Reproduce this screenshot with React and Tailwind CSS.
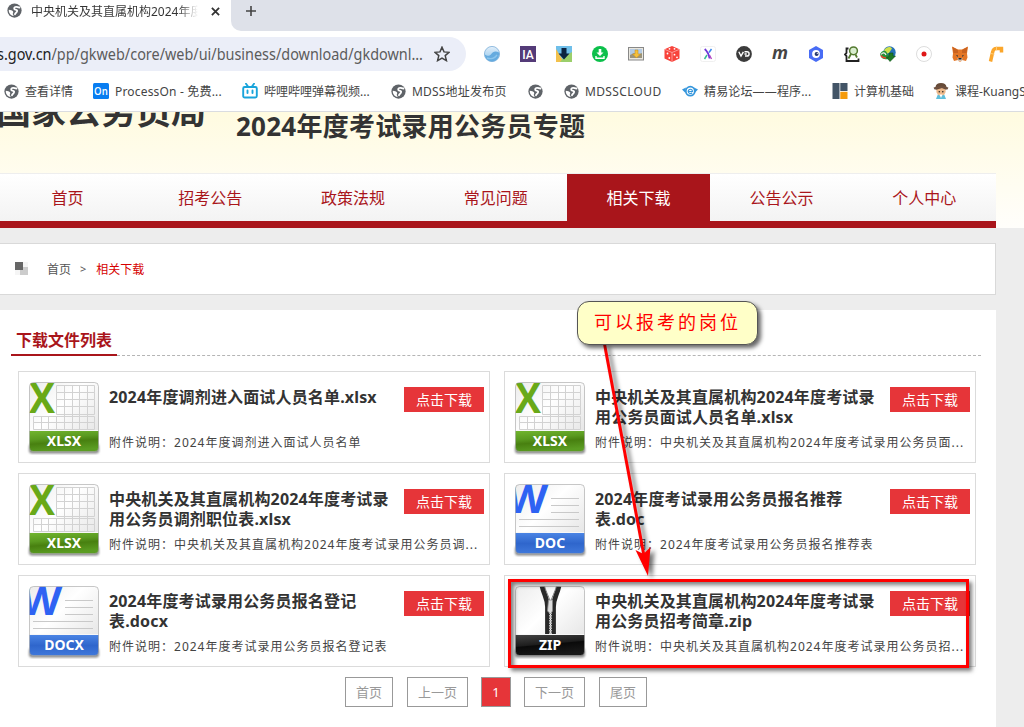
import React from "react";

const UI = "font-['Noto_Sans','Noto_Sans_CJK_SC',sans-serif]";

function Globe() {
  return (
    <svg viewBox="0 0 16 16" className="size-[15px] shrink-0">
      <circle cx="8" cy="8" r="7.600" fill="#5f6368" />
      <path d="M13.300 4.800C11.500 5 10.800 3.300 8.800 4.300 7 5.300 7.500 6.800 9 7.100c1.800.4 2 1 1.700 2-.4 1.300-1.900 1.300-2.200 2.900" fill="none" stroke="#fff" strokeWidth="1.900" strokeLinecap="round" />
      <path d="M1.900 7.200c2 .2 3.800.5 4.600 1.800.6 1.100-.5 1.600-.3 2.600.1.700.8 1 .8 2.200C3.800 13.400 1.600 10.500 1.900 7.200z" fill="#fff" />
    </svg>
  );
}

const S = ({ children }) => (
  <svg viewBox="0 0 16 16" className="size-4 shrink-0">{children}</svg>
);

const extensions = [
  <S><defs><linearGradient id="sph" x1="0" y1="0" x2="0" y2="1"><stop offset="0" stopColor="#e3effa" /><stop offset="1" stopColor="#8cc4ea" /></linearGradient></defs><circle cx="8" cy="8" r="7.600" fill="url(#sph)" stroke="#6ba5d4" strokeWidth=".7" /><path d="M.8 8.500c3 2 5 1.500 6.500-.5S11 4.500 15 6.500C15.500 12 12 15.300 8 15.300S1.200 12.500.8 8.500z" fill="#65abdf" /><path d="M3 12c4 1.500 8 0 10-3" stroke="#8cc5ec" strokeWidth="1.500" fill="none" /></S>,
  <S><rect width="16" height="16" fill="#543b78" /><text x="8" y="12.700" textAnchor="middle" fill="#fff" fontSize="13" fontWeight="500" fontFamily="Roboto" textLength="11.500" lengthAdjust="spacingAndGlyphs">IA</text></S>,
  <S><rect width="16" height="16" fill="#6fbfea" /><path d="M0 3v13h8z" fill="#f2c14c" /><path d="M16 6v10H4l4-5z" fill="#9bcf6b" /><path d="M5.500 2h5v5.500h3L8 13.500 2.500 7.500h3z" fill="#0c2340" /></S>,
  <S><circle cx="8" cy="8" r="8" fill="#0cc04b" /><path d="M6.700 3h2.600v3.500h2.200L8 10 4.500 6.500h2.200z" fill="#fff" /><path d="M4 10v2.300h8V10" fill="none" stroke="#fff" strokeWidth="1.400" /></S>,
  <S><rect x=".5" y="1.500" width="15" height="12.500" fill="#e9e7df" stroke="#888" /><rect x="2" y="3" width="12" height="6" fill="#b4cbe4" /><path d="M2 9l4-2 3 2 5-2v5H2z" fill="#9a937c" /><path d="M7 4h3v4h2.500L8.500 12 4.500 8H7z" fill="#f4c03b" stroke="#c68b15" strokeWidth=".5" /></S>,
  <S><path d="M8 0l7.500 3.200v9.300L8 16 .5 12.500V3.200z" fill="#f8433b" /><path d="M1 3.500l7 3 7-3M8 6.500V16" stroke="#fbb" strokeWidth=".7" fill="none" /><g fill="#fff"><circle cx="5.500" cy="2.800" r=".9" /><circle cx="10.500" cy="2.800" r=".9" /><circle cx="3.500" cy="7.500" r=".9" /><circle cx="5.300" cy="12" r=".9" /><circle cx="10.500" cy="8.700" r=".9" /><circle cx="13" cy="11.300" r=".9" /></g></S>,
  <S><rect x=".5" y=".5" width="15" height="15" rx="2" fill="#fff" stroke="#f0f0f0" /><path d="M4.700 3C7.500 5.500 9 9 9.500 12.500" stroke="#7037d8" strokeWidth="1.700" fill="none" /><path d="M11.500 3L9 6.500" stroke="#3987ed" strokeWidth="1.500" /><path d="M7 9l-2.500 4" stroke="#35bd92" strokeWidth="1.500" /><path d="M9.500 9l2 4" stroke="#b040c0" strokeWidth="1.300" /></S>,
  <S><circle cx="8" cy="8" r="7.900" fill="#3b3b3b" /><path d="M2.800 5.800l2.200 4.300 2.400-4.300M8.500 5.800h2.500a2.100 2.100 0 010 4.200H9M8.500 8h2.200" stroke="#fff" strokeWidth="1.400" fill="none" /></S>,
  <S><text x="8" y="12.800" textAnchor="middle" fontSize="18" fontStyle="italic" fontWeight="700" fill="#444" fontFamily="Open Sans" textLength="16" lengthAdjust="spacingAndGlyphs">m</text></S>,
  <S><path d="M8 0l7 4v8l-7 4-7-4V4z" fill="#486cf5" /><circle cx="8" cy="8" r="3.900" fill="#fff" /><circle cx="8.600" cy="8" r="2" fill="#24376f" /><circle cx="9.300" cy="7.500" r=".6" fill="#fff" /></S>,
  <S><path d="M4.500 2.500H2.500V7L1 8.500 2.500 10v5h12v-2.500" stroke="#222" strokeWidth="1.800" fill="none" /><circle cx="9.500" cy="4.800" r="3.900" fill="#d9edcf" stroke="#53792f" strokeWidth="1.500" /><path d="M7 8L4.500 12.500M11.500 8.500l1.500 3" stroke="#53792f" strokeWidth="1.800" /></S>,
  <S><circle cx="9.500" cy="6.500" r="6.200" fill="#2673b8" /><path d="M4 4c3-4 7-3.500 8-1.500L9 7 6 8z" fill="#cfe04a" /><path d="M0 8c2-4 6-4.500 7-1 .5 2 2 3 4 3l-1 3C5 14 1 13 0 8z" fill="#279038" /><path d="M1 8.500c2-2.500 4-2 5 .5" stroke="#f2f2f2" strokeWidth="1.200" fill="none" /><path d="M1 9.500c1 2 3 2.500 5 2.500" stroke="#e9442b" strokeWidth="1.400" fill="none" /><path d="M9 7h4v3h2.500L10 15.500 6.500 11H9z" fill="#1f7a26" stroke="#0d5317" strokeWidth=".6" /></S>,
  <S><circle cx="8" cy="8" r="7.500" fill="#fff" stroke="#ddd" /><circle cx="8" cy="8" r="2.500" fill="#df1717" /></S>,
  <S><path d="M0 .5l6 3h4l6-3-1 7 .5 4-1.500 3.500-4-1-1 1.500H7L6 14l-4 1L.5 11.500 1 7.500z" fill="#e47625" /><path d="M.500 1L6 4v3L1.500 7zM15.500 1L10 4v3l4.500 0z" fill="#c9621f" /><path d="M4 9l2 .5-.5 1.500zM12 9l-2 .5.500 1.500z" fill="#233447" /><path d="M5.500 12h5L10 15H6z" fill="#d8c4b3" /><path d="M6.500 12h3v1.500h-3z" fill="#222" /></S>,
  <S><path d="M2.500 15.500L4.700 6C5.300 3 6.300 2.400 8.500 2.400h6.700M13.500 2.500v4" stroke="#fba62b" strokeWidth="3.500" fill="none" /><path d="M8.500 .5v4M3 7.500l3.500 .8" stroke="#ffd48b" strokeWidth=".8" /></S>,
];

const bookmarks = [
  { icon: <Globe />, label: "查看详情", pos: "w-[89px]" },
  { icon: <S><rect width="16" height="16" rx="1.500" fill="#087df1" /><text x="8" y="12.300" textAnchor="middle" fontSize="11" fill="#fff" fontWeight="600" fontFamily="Open Sans" textLength="14" lengthAdjust="spacingAndGlyphs">On</text></S>, label: "ProcessOn - 免费...", pos: "w-[149px] tracking-[0.18px]" },
  { icon: <S><rect x="1.200" y="4" width="13.600" height="10.500" rx="1.500" fill="none" stroke="#18a4db" strokeWidth="1.900" /><path d="M4 .8l2 2.700M12 .8l-2 2.700M5.500 7.500v2.500M10.500 7.500v2.500" stroke="#18a4db" strokeWidth="1.900" strokeLinecap="round" /></S>, label: "哔哩哔哩弹幕视频...", pos: "w-[149px]" },
  { icon: <Globe />, label: "MDSS地址发布页", pos: "w-[137px] tracking-[0.2px]" },
  { icon: <Globe />, label: "", pos: "w-[36px]" },
  { icon: <Globe />, label: "MDSSCLOUD", pos: "w-[118px] tracking-[0.35px]" },
  { icon: <S><circle cx="8.300" cy="8.200" r="4.500" fill="none" stroke="#3596dc" strokeWidth="1.800" /><path d="M6 8.500h4.500c0-3-4-3-4.300 0 .2 2.200 2.500 2.500 4 1.200" stroke="#3596dc" strokeWidth="1.200" fill="none" /><path d="M0 6.500l4-2-1 5zM16 6.500l-4-2 1 5z" fill="#3596dc" /></S>, label: "精易论坛——程序...", pos: "w-[150px] tracking-[0.15px]" },
  { icon: <S><path d="M.5 0h7v16h-7zM8.300 0h7.200v8H8.300z" fill="#435567" /><path d="M8.300 8.800h7.200V16H8.300z" fill="#f59b0b" /></S>, label: "计算机基础", pos: "w-[101px]" },
  { icon: <S><path d="M5 11h6l2 5H3z" fill="#60bedb" /><circle cx="8" cy="8" r="4.700" fill="#edb98b" /><path d="M2.500 7V4Q3 0 8 0t5.500 4v3L9 5z" fill="#674b38" /><path d="M1 5.500q7-3 14 0" stroke="#6f5140" strokeWidth="2" fill="none" /><circle cx="6.300" cy="8.700" r=".8" fill="#222" /><circle cx="9.800" cy="8.700" r=".8" fill="#222" /><path d="M6.500 11.500h3L8 15z" fill="#fff" /></S>, label: "课程-KuangS", pos: "w-[110px]" },
];

function FileIcon({ type }) {
  const xls = type === "XLSX";
  const zip = type === "ZIP";
  const band = xls ? "url(#g-green)" : zip ? "url(#g-black)" : "url(#g-blue)";
  return (
    <svg viewBox="0 0 74 78" className="-ml-[2px] h-[78px] w-[74px] shrink-0 overflow-visible">
      <defs>
        <linearGradient id="g-paper" x1="0" y1="0" x2="1" y2="1"><stop offset="0" stopColor="#ececec" /><stop offset=".4" stopColor="#fff" /><stop offset="1" stopColor="#dedede" /></linearGradient>
        <linearGradient id="g-green" x1="0" y1="0" x2=".25" y2="1"><stop offset="0" stopColor="#71b52e" /><stop offset=".4" stopColor="#5a9a20" /><stop offset=".6" stopColor="#488010" /><stop offset="1" stopColor="#5b9d22" /></linearGradient>
        <linearGradient id="g-blue" x1="0" y1="0" x2="0" y2="1"><stop offset="0" stopColor="#4a84e4" /><stop offset=".5" stopColor="#2f66cc" /><stop offset="1" stopColor="#4079dc" /></linearGradient>
        <linearGradient id="g-black" x1="0" y1="0" x2=".3" y2="1"><stop offset="0" stopColor="#444" /><stop offset=".5" stopColor="#1d1d1d" /><stop offset=".55" stopColor="#0a0a0a" /><stop offset="1" stopColor="#191919" /></linearGradient>
        <clipPath id="card-clip"><rect x="2.500" y=".5" width="69" height="69" rx="4" /></clipPath>
        <filter id="soft"><feGaussianBlur stdDeviation="1.200" /></filter>
      </defs>
      <rect x="2" y="62" width="70" height="9.500" rx="3" fill="#888" filter="url(#soft)" />
      <g clipPath="url(#card-clip)">
        <rect x="2" y="0" width="70" height="70" fill="url(#g-paper)" />
        {xls && (
          <g>
            <path d="M29.500 3.500h38v7h-38zM29.500 10.500h38v7h-38zM29.500 17.500h38v7h-38zM29.500 24.500h38v8h-38zM6.500 34.500h61v6h-61zM6.500 40.500h61v7h-61zM37.500 3v44M45.500 3v44M52.500 3v44M60.500 3v44M14.500 35v12M21.500 35v12M29.500 35v12" fill="none" stroke="#d2d2d2" />
            <text x="2" y="31" fontFamily="Open Sans" fontWeight="700" fontSize="42" fill="#69a918" textLength="26" lengthAdjust="spacingAndGlyphs">X</text>
          </g>
        )}
        {!xls && !zip && (
          <g>
            <path d="M38 14.500h28M38 21.500h28M38 28.500h28M6 35.500h60M6 42.500h60" stroke="#c9c9c9" />
            <g transform="translate(0 29) skewX(-5)">
              <text x="-7" y="0" fontFamily="Open Sans" fontWeight="700" fontSize="40" fill="#2e62f3" textLength="40" lengthAdjust="spacingAndGlyphs">W</text>
            </g>
          </g>
        )}
        {zip && (
          <g>
            <path d="M29 0c2 9 5.500 12 5.500 21v28M46 0c-2 9-5.500 12-5.500 21v28" stroke="#292929" strokeWidth="4.800" fill="none" />
            <path d="M31.500 0c2 7 4 10 5.500 15M43.500 0c-2 7-4 10-5.500 15" stroke="#777" strokeWidth="1" fill="none" />
            <path d="M37.500 24v25" stroke="#bbb" strokeWidth="3" fill="none" strokeDasharray="1.500 1" />
            <path d="M35.500 14h4v11l-2 3-3-3z" fill="#ddd" stroke="#888" strokeWidth=".8" />
          </g>
        )}
        <rect x="2" y="49" width="70" height="21" fill={band} />
        <path d="M2 48.500h70" stroke="#f7f7f7" />
      </g>
      <rect x="2.500" y=".5" width="69" height="69" rx="4" fill="none" stroke="#999" strokeOpacity=".55" />
      <text x="37" y="64" textAnchor="middle" fontFamily="Noto Sans" fontWeight="700" fontSize="14" fill="#fff">{type}</text>
    </svg>
  );
}

const files = [
  { type: "XLSX", title: ["2024年度调剂进入面试人员名单.xlsx"], note: "2024年度调剂进入面试人员名单" },
  { type: "XLSX", title: ["中央机关及其直属机构2024年度考试录", "用公务员面试人员名单.xlsx"], note: "中央机关及其直属机构2024年度考试录用公务员面..." },
  { type: "XLSX", title: ["中央机关及其直属机构2024年度考试录", "用公务员调剂职位表.xlsx"], note: "中央机关及其直属机构2024年度考试录用公务员调..." },
  { type: "DOC", title: ["2024年度考试录用公务员报名推荐", "表.doc"], note: "2024年度考试录用公务员报名推荐表" },
  { type: "DOCX", title: ["2024年度考试录用公务员报名登记", "表.docx"], note: "2024年度考试录用公务员报名登记表" },
  { type: "ZIP", title: ["中央机关及其直属机构2024年度考试录", "用公务员招考简章.zip"], note: "中央机关及其直属机构2024年度考试录用公务员招..." },
];

function FileCard({ file }) {
  return (
    <div className="flex h-[92px] w-[472px] border border-[#dbdbdb] bg-white pt-[10px] pl-[10px]">
      <FileIcon type={file.type} />
      <div className="ml-2 min-w-0 flex-1">
        <div className="flex h-[49px]">
          <div className="w-[295px] pt-[5px] text-[16px] leading-5 font-bold tracking-[0.16px] whitespace-nowrap text-[#333]">
            {file.title.map((t) => <div key={t}>{t}</div>)}
          </div>
          <button className="mt-[5px] h-[25px] w-[80px] bg-[#e63539] text-[14px] leading-[25px] text-white">点击下载</button>
        </div>
        <div className="mt-[3px] text-[12px] leading-[18px] tracking-[1px] whitespace-nowrap text-[#444]">附件说明：{file.note}</div>
      </div>
    </div>
  );
}

const nav = ["首页", "招考公告", "政策法规", "常见问题", "相关下载", "公告公示", "个人中心"];

export default function App() {
  return (
    <div className={`relative flex h-[727px] w-[1024px] flex-col overflow-hidden bg-[#ededed] ${UI}`}>
      <div className="flex h-[31px] shrink-0 bg-white">
        <div className="flex h-[31px] w-[231px] items-start">
          <div className="mt-[3px] ml-[7px]"><Globe /></div>
          <div className="mt-[2px] ml-[9px] w-[167px] overflow-hidden bg-gradient-to-r from-[#333] from-88% to-transparent bg-clip-text text-[12px] leading-5 whitespace-nowrap text-transparent">中央机关及其直属机构2024年度</div>
          <svg viewBox="0 0 10 10" className="mt-[7px] ml-[13px] size-[9px]"><path d="M1 1l8 8M9 1L1 9" stroke="#333" strokeWidth="2" /></svg>
        </div>
        <div className="flex-1 rounded-bl-[10px] bg-[#dee1e9] pt-[5px] pl-[14px]">
          <svg viewBox="0 0 12 12" className="size-3"><path d="M6 1v10M1 6h10" stroke="#444" strokeWidth="1.600" /></svg>
        </div>
      </div>
      <div className="flex h-[46px] shrink-0 items-center bg-white">
        <div className="flex h-[34px] w-[466px] items-center rounded-r-full bg-[#ebeef8]">
          <div className="-ml-[3px] w-[427px] text-[16px] whitespace-nowrap">
            <svg className="mt-px h-6 w-[427px]" role="img"><text x="0" y="17" textLength="426" lengthAdjust="spacingAndGlyphs" fill="#5c5c5c"><tspan fill="#222">s.gov.cn</tspan>/pp/gkweb/core/web/ui/business/download/gkdownl...</text></svg>
          </div>
          <svg viewBox="0 0 16 16" className="ml-[10px] size-4"><path d="M8 1.200l2 4.700 5 .4-3.800 3.300 1.200 5L8 12l-4.400 2.600 1.200-5L1 6.300l5-.4z" fill="none" stroke="#444" strokeWidth="1.500" /></svg>
        </div>
        <div className="ml-[18px] flex gap-5">{extensions.map((e, i) => <React.Fragment key={i}>{e}</React.Fragment>)}</div>
      </div>
      <div className="flex h-[35px] shrink-0 items-center overflow-hidden border-b border-[#dadce0] bg-white pb-[6px] pl-1">
        {bookmarks.map((b, i) => (
          <div key={i} className={`flex shrink-0 items-center gap-[6px] text-[12px] whitespace-nowrap text-[#444] ${b.pos}`}>{b.icon}{b.label && <span className="pt-px">{b.label}</span>}</div>
        ))}
      </div>
      <div className="h-[116px] shrink-0 bg-gradient-to-b from-[#fffbe0] to-[#fffefb]">
        <div className="flex h-[61px] overflow-hidden whitespace-nowrap text-[#333]">
          <div className="-mt-[19px] -ml-[4px] w-[240px] text-[35px] leading-[36px] font-bold">国家公务员局</div>
          <div className="-mt-[4px] text-[26px] leading-[36px] font-bold tracking-[0.25px]">2024年度考试录用公务员专题</div>
        </div>
        <div className="flex h-[55px] w-[996px] overflow-hidden border-t border-b-7 border-t-[#eee] border-b-[#a9151b] bg-gradient-to-b from-white to-[#f3f3f3]">
          {nav.map((n, i) => (
            <div key={n} className={`h-[47px] w-[142.8px] shrink-0 text-center text-[16px] leading-[48px] first:-ml-1 ${i === 4 ? "bg-[#a9151b] text-white" : "text-[#a9151b]"}`}>{n}</div>
          ))}
        </div>
      </div>
      <div className="mt-[15px] flex h-[52px] w-[996px] shrink-0 items-center border border-l-0 border-[#d9d9d9] bg-white pt-px pl-[15px] text-[12px] text-[#555]">
        <svg viewBox="0 0 13 13" className="mb-[3px] size-[13px]"><path d="M0 0h13v13H0z" fill="#f5f5f5" /><path d="M5 5h8v8H5z" fill="#ccc" /><path d="M0 0h8v8H0z" fill="#666" /></svg>
        <span className="ml-[19px]">首页</span>
        <span className="mr-[10px] ml-[9px] text-[11px]">&gt;</span>
        <span className="text-[#d60000]">相关下载</span>
      </div>
      <div className="mt-[15px] w-[996px] flex-1 bg-white">
        <div className="ml-[11px] flex h-[46px] w-[970px]">
          <h2 className="h-[46px] w-[106px] border-b-2 border-[#a9151b] pt-[18px] pl-[5px] text-[16px] leading-6 font-bold text-[#a9151b]">下载文件列表</h2>
          <div className="h-[46px] flex-1 border-b border-dashed border-[#b5b5b5]" />
        </div>
        <div className="mt-[15px] ml-[18px] grid w-[958px] grid-cols-2 gap-x-[14px] gap-y-[10px]">
          {files.map((f) => <FileCard key={f.title.join("")} file={f} />)}
        </div>
        <div className="mt-[10px] ml-[345px] flex text-[13px] leading-[28px] text-[#999] *:h-[30px] *:border *:border-[#999] *:text-center">
          <span className="w-[48px]">首页</span>
          <span className="ml-[14px] w-[61px]">上一页</span>
          <span className="ml-[13px] w-[30px] bg-[#e63539] text-white">1</span>
          <span className="ml-[13px] w-[61px]">下一页</span>
          <span className="ml-[14px] w-[48px]">尾页</span>
        </div>
      </div>
      <div className="absolute top-[579px] left-[508px] h-[89px] w-[461px] border-3 border-[#f00] shadow-[3px_3px_4px_rgba(0,0,0,0.5),inset_3px_3px_4px_rgba(0,0,0,0.5)]" />
      <svg viewBox="0 0 80 250" className="absolute top-[335px] left-[590px] h-[250px] w-[80px] drop-shadow-[4px_3px_2px_rgba(0,0,0,0.55)]">
        <path d="M14.500 9L54 221" stroke="#f00" strokeWidth="3" />
        <path d="M58 241L45.500 215l8 4 7-7z" fill="#f00" />
      </svg>
      <div className="absolute top-[301px] left-[577px] h-[44px] w-[181px] rounded-[12px] border border-[#555] bg-[#ffffc8] pl-[16px] font-['Liberation_Serif','Noto_Sans_CJK_SC',serif] text-[18px] leading-[43px] tracking-[3px] whitespace-nowrap text-[#f00] shadow-[3px_3px_4px_rgba(0,0,0,0.6)]">可以报考的岗位</div>
    </div>
  );
}
